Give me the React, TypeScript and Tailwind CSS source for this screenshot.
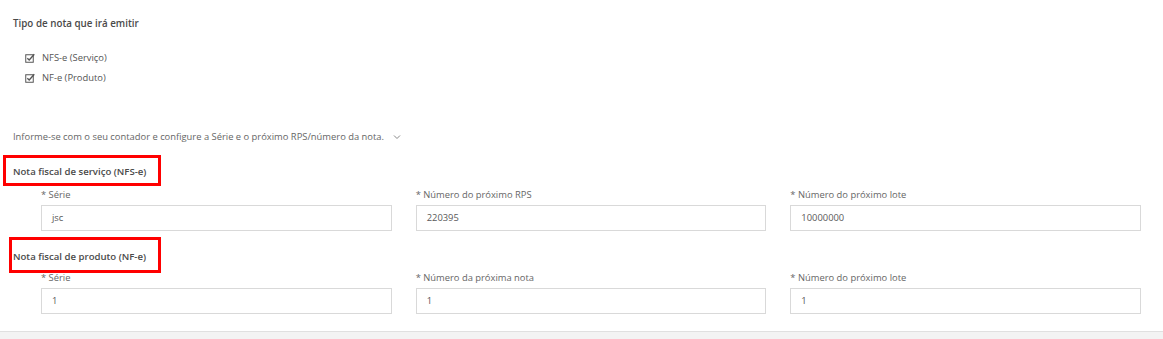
import React from 'react';

type Field = { label: string; value: string };

const servico: Field[] = [
  { label: 'Série', value: 'jsc' },
  { label: 'Número do próximo RPS', value: '220395' },
  { label: 'Número do próximo lote', value: '10000000' },
];

const produto: Field[] = [
  { label: 'Série', value: '1' },
  { label: 'Número da próxima nota', value: '1' },
  { label: 'Número do próximo lote', value: '1' },
];

const CheckIcon = () => (
  <svg width="10" height="10" viewBox="0 0 10 10" className="text-[#555]">
    <rect x="0.75" y="1.75" width="7.5" height="7.5" fill="none" stroke="currentColor" strokeWidth="1" />
    <path d="M2.3 5.2 L4.2 7 L9.3 1.2" fill="none" stroke="currentColor" strokeWidth="1.3" />
  </svg>
);

const FieldRow = ({ fields }: { fields: Field[] }) => (
  <div className="grid grid-cols-3 gap-x-[24px] pl-[41px] pr-[22px]">
    {fields.map((f, i) => (
      <div key={i} className="flex flex-col">
        <label className="h-[14px] text-[9.4px] leading-[14px] text-[#666]">* {f.label}</label>
        <div className="mt-[3px] flex h-[26px] items-center border border-[#d9d9d9] bg-white px-[10px] text-[9.4px] text-[#5a5a5a]">
          {f.value}
        </div>
      </div>
    ))}
  </div>
);

export default function App() {
  return (
    <div className="relative h-[339px] w-[1163px] overflow-hidden bg-white font-['Open_Sans',sans-serif]">
      <div className="h-[331px] pt-[17px]">
        <h3 className="pl-[13px] text-[9.8px] font-semibold leading-[14px] text-[#4a4a4a]">Tipo de nota que irá emitir</h3>

        <div className="mt-[20px] flex flex-col gap-[6px] pl-[25px]">
          {['NFS-e (Serviço)', 'NF-e (Produto)'].map((t) => (
            <div key={t} className="flex h-[14px] items-center gap-[7px] text-[9.4px] text-[#555]">
              <CheckIcon />
              <span>{t}</span>
            </div>
          ))}
        </div>

        <div className="mt-[45px] flex h-[14px] items-center pl-[13px] text-[9.4px] text-[#666]">
          <span>Informe-se com o seu contador e configure a Série e o próximo RPS/número da nota.</span>
          <svg width="8" height="6" viewBox="0 0 8 6" className="ml-[9px] text-[#888]">
            <path d="M1 1.5 L4 4.5 L7 1.5" fill="none" stroke="currentColor" strokeWidth="1" />
          </svg>
        </div>

        <h4 className="mt-[21px] h-[14px] pl-[13px] text-[9.6px] font-semibold leading-[14px] text-[#4a4a4a]">
          Nota fiscal de serviço (NFS-e)
        </h4>
        <div className="mt-[9px]">
          <FieldRow fields={servico} />
        </div>

        <h4 className="mt-[19px] h-[14px] pl-[13px] text-[9.6px] font-semibold leading-[14px] text-[#4a4a4a]">
          Nota fiscal de produto (NF-e)
        </h4>
        <div className="mt-[7px]">
          <FieldRow fields={produto} />
        </div>
      </div>
      <div className="h-[8px] border-t border-[#e0e0e0] bg-[#f3f3f3]" />

      {/* red annotation boxes */}
      <div className="pointer-events-none absolute left-[3px] top-[155px] h-[31px] w-[158px] border-[3px] border-[#f00]" />
      <div className="pointer-events-none absolute left-[9px] top-[237px] h-[36px] w-[152px] border-[3px] border-[#f00]" />
    </div>
  );
}
